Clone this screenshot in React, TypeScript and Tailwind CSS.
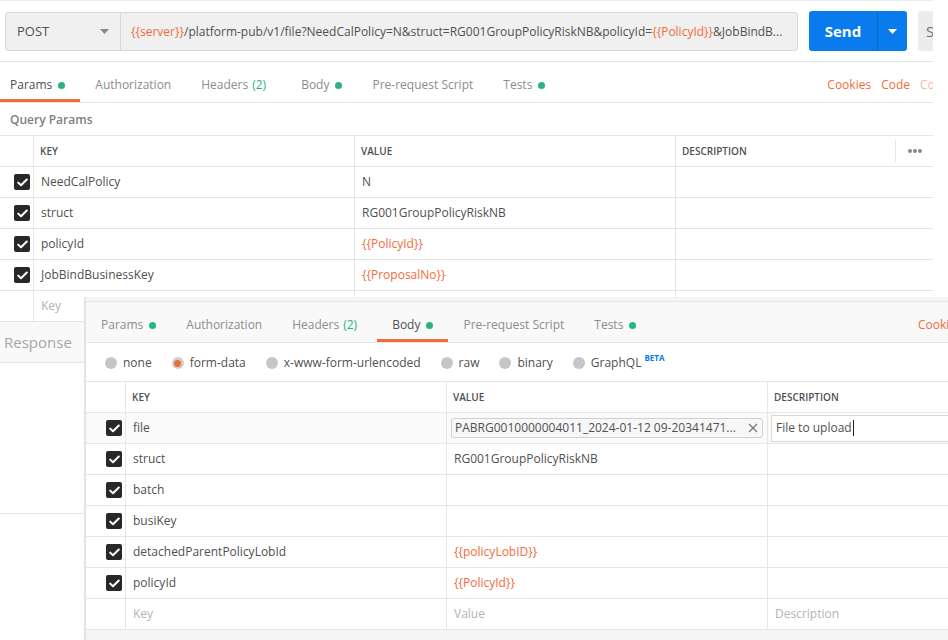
import React from "react";

const ORANGE = "text-[#f26b3a]";

const Dot = () => <span className="ml-[6px] inline-block h-[7px] w-[7px] rounded-full bg-[#26b47f]" />;

const Check = () => (
  <span className="flex h-[16px] w-[16px] items-center justify-center rounded-[2px] bg-[#282828]">
    <svg width="11" height="9" viewBox="0 0 11 9" fill="none">
      <path d="M1.2 4.6 L4 7.3 L9.8 1.5" stroke="white" strokeWidth="2" strokeLinecap="round" strokeLinejoin="round" />
    </svg>
  </span>
);

const Var = ({ name }: { name: string }) => <span className={ORANGE}>{`{{${name}}}`}</span>;

type Tab = { label: string; dot?: boolean; count?: string };

const tabs: Tab[] = [
  { label: "Params", dot: true },
  { label: "Authorization" },
  { label: "Headers", count: "(2)" },
  { label: "Body", dot: true },
  { label: "Pre-request Script" },
  { label: "Tests", dot: true },
];

const TabBar = ({ active, first }: { active: string; first: number }) => (
  <div className="flex h-full items-stretch">
    {tabs.map((t, i) => (
      <div
        key={t.label}
        className={`relative flex items-center pt-[6px] ${t.count ? "pr-[20px]" : "pr-[15px]"} ${
          i === 0 && first === 10 ? "pl-[10px]" : "pl-[15px]"
        } ${t.label === active ? "text-[#505050]" : "text-[#8c8c8c]"}`}
      >
        {t.label}
        {t.count && <span className="ml-[4px] text-[#26b47f]">{t.count}</span>}
        {t.dot && <Dot />}
        {t.label === active && <span className="absolute bottom-[0px] left-0 right-0 h-[3px] bg-[#f26b3a]" />}
      </div>
    ))}
  </div>
);

const queryRows: { k: string; v: React.ReactNode }[] = [
  { k: "NeedCalPolicy", v: "N" },
  { k: "struct", v: "RG001GroupPolicyRiskNB" },
  { k: "policyId", v: <Var name="PolicyId" /> },
  { k: "JobBindBusinessKey", v: <Var name="ProposalNo" /> },
];

const bodyRows: { k: string; v?: React.ReactNode }[] = [
  { k: "struct", v: "RG001GroupPolicyRiskNB" },
  { k: "batch" },
  { k: "busiKey" },
  { k: "detachedParentPolicyLobId", v: <Var name="policyLobID" /> },
  { k: "policyId", v: <Var name="PolicyId" /> },
];

const radios = ["none", "form-data", "x-www-form-urlencoded", "raw", "binary", "GraphQL"];

export default function App() {
  return (
    <div className="relative h-[640px] w-[948px] overflow-hidden bg-white font-['Open_Sans',sans-serif] text-[12px] text-[#505050]">
      {/* first screenshot: params */}
      <div className="w-[933px] border-t border-[#ececec]">
        <div className="flex h-[61px] items-start overflow-hidden border-b border-[#e6e6e6] pl-[5px] pt-[11px]">
          <div className="flex h-[39px] w-[793px] shrink-0 rounded-[3px] border border-[#d9d9d9] bg-[#f0f0f0]">
            <div className="flex w-[115px] shrink-0 items-center justify-between border-r border-[#d9d9d9] px-[11px] text-[13px] text-[#505050]">
              POST
              <svg width="9" height="5" viewBox="0 0 9 5">
                <path d="M0 0 H9 L4.5 5 Z" fill="#888" />
              </svg>
            </div>
            <div className="flex min-w-0 items-center whitespace-nowrap pl-[10px] text-[12px] text-[#505050]">
              <Var name="server" />
              /platform-pub/v1/file?NeedCalPolicy=N&amp;struct=RG001GroupPolicyRiskNB&amp;policyId=
              <Var name="PolicyId" />
              &amp;JobBindB...
            </div>
          </div>
          <div className="ml-[11px] mt-[-1px] flex h-[40px] w-[98px] shrink-0 overflow-hidden rounded-[3px] bg-[#097bed]">
            <div className="flex w-[68px] items-center justify-center text-[15px] font-bold text-white">Send</div>
            <div className="flex flex-1 items-center justify-center border-l border-[#0a6acc]">
              <svg width="9" height="5" viewBox="0 0 9 5">
                <path d="M0 0 H9 L4.5 5 Z" fill="white" />
              </svg>
            </div>
          </div>
          <div className="ml-[11px] mt-[-1px] flex h-[40px] min-w-0 flex-1 items-center overflow-hidden rounded-l-[3px] bg-[#ececec] pl-[8px] text-[15px] text-[#707070]">
            S
          </div>
        </div>
        <div className="flex h-[41px] items-stretch justify-between border-b border-[#e6e6e6] text-[12px]">
          <TabBar active="Params" first={10} />
          <div className="flex items-center gap-[10px] pt-[6px] text-[12px] text-[#f26b3a]">
            <span>Cookies</span>
            <span>Code</span>
            <span className="w-[13px] overflow-hidden whitespace-nowrap text-[#f8b8a0]">Co</span>
          </div>
        </div>
        <div className="flex h-[32px] items-center pl-[10px] pt-[2px] text-[12px] font-semibold text-[#808080]">Query Params</div>
        <div className="grid grid-cols-[34px_321px_321px_257px] border-t border-[#e6e6e6]">
          <div className="h-[31px] border-b border-r border-[#e6e6e6]" />
          <div className="flex h-[31px] items-center border-b border-r border-[#e6e6e6] pl-[6px] text-[10px] font-semibold text-[#505050]">KEY</div>
          <div className="flex h-[31px] items-center border-b border-r border-[#e6e6e6] pl-[6px] text-[10px] font-semibold text-[#505050]">VALUE</div>
          <div className="flex h-[31px] items-center border-b border-[#e6e6e6] pl-[6px] text-[10px] font-semibold text-[#505050]">
            <span className="flex-1">DESCRIPTION</span>
            <span className="flex h-[22px] items-center gap-[1px] border-l border-[#e6e6e6] pl-[12px] pr-[11px]">
              <i className="h-[4px] w-[4px] rounded-full bg-[#888]" />
              <i className="h-[4px] w-[4px] rounded-full bg-[#888]" />
              <i className="h-[4px] w-[4px] rounded-full bg-[#888]" />
            </span>
          </div>
          {queryRows.map((r) => (
            <React.Fragment key={r.k}>
              <div className="flex h-[31px] items-center justify-end border-b border-r border-[#e6e6e6] pr-[3px]">
                <Check />
              </div>
              <div className="flex h-[31px] items-center border-b border-r border-[#e6e6e6] pl-[7px]">{r.k}</div>
              <div className="flex h-[31px] items-center border-b border-r border-[#e6e6e6] pl-[7px]">{r.v}</div>
              <div className="h-[31px] border-b border-[#e6e6e6]" />
            </React.Fragment>
          ))}
          <div className="h-[31px] border-b border-r border-[#e6e6e6]" />
          <div className="flex h-[31px] items-center border-b border-r border-[#e6e6e6] pl-[7px] text-[#b3b3b3]">Key</div>
          <div className="h-[31px] border-b border-r border-[#e6e6e6]" />
          <div className="h-[31px] border-b border-[#e6e6e6]" />
        </div>
        <div className="flex h-[41px] items-center border-b border-[#e6e6e6] bg-[#f9f9f9] pl-[4px] text-[15px] text-[#a6a6a6]">Response</div>
        <div className="h-[151px] border-b border-[#e6e6e6]" />
      </div>

      {/* second screenshot: body, laid over the first */}
      <div className="absolute left-[84px] top-[297px] flex h-[343px] w-[864px] flex-col border-l-2 border-[#e3e3e3] bg-[#f5f5f5]">
        <div className="mt-[4px] flex h-[42px] items-stretch justify-between border-y border-[#e6e6e6] bg-[#f9f9f9]">
          <TabBar active="Body" first={15} />
          <div className="flex items-center pt-[6px] text-[#f26b3a]">
            <span className="w-[30px] overflow-hidden whitespace-nowrap">Cookies</span>
          </div>
        </div>
        <div className="flex h-[39px] items-center gap-[20px] border-b border-[#e6e6e6] bg-white pl-[19px] pt-[2px]">
          {radios.map((r) => (
            <div key={r} className="flex items-center gap-[6px]">
              {r === "form-data" ? (
                <span className="flex h-[12px] w-[12px] items-center justify-center rounded-full bg-[#cfcfcf]">
                  <span className="h-[7px] w-[7px] rounded-full bg-[#f26b3a]" />
                </span>
              ) : (
                <span className="h-[12px] w-[12px] rounded-full bg-[#c6c6c6]" />
              )}
              <span className="text-[12px] text-[#505050]">{r}</span>
              {r === "GraphQL" && <span className="-ml-[3px] mb-[10px] text-[8px] font-bold text-[#097bed]">BETA</span>}
            </div>
          ))}
        </div>
        <div className="grid grid-cols-[40px_321px_321px_1fr] bg-white">
          <div className="h-[31px] border-b border-r border-[#e6e6e6]" />
          <div className="flex h-[31px] items-center border-b border-r border-[#e6e6e6] pl-[6px] text-[10px] font-semibold">KEY</div>
          <div className="flex h-[31px] items-center border-b border-r border-[#e6e6e6] pl-[6px] text-[10px] font-semibold">VALUE</div>
          <div className="flex h-[31px] items-center border-b border-[#e6e6e6] pl-[6px] text-[10px] font-semibold">DESCRIPTION</div>

          <div className="flex h-[31px] items-center justify-end border-b border-r border-[#e6e6e6] bg-[#fafafa] pr-[3px]">
            <Check />
          </div>
          <div className="flex h-[31px] items-center border-b border-r border-[#e6e6e6] bg-[#fafafa] pl-[7px]">file</div>
          <div className="flex h-[31px] items-center border-b border-r border-[#e6e6e6] bg-[#fafafa] px-[4px]">
            <div className="flex h-[20px] flex-1 items-center justify-between rounded-[3px] border border-[#d0d0d0] bg-[#f7f7f7] pl-[3px] pr-[4px]">
              <span>PABRG0010000004011_2024-01-12 09-20341471...</span>
              <svg width="10" height="10" viewBox="0 0 10 10">
                <path d="M1 1 L9 9 M9 1 L1 9" stroke="#777" strokeWidth="1.3" />
              </svg>
            </div>
          </div>
          <div className="flex h-[31px] items-center border-b border-[#e6e6e6] bg-[#fafafa] pl-[3px]">
            <div className="flex h-[27px] flex-1 items-center border border-r-0 border-[#d9d9d9] bg-white pl-[4px]">
              File to upload
              <span className="ml-[1px] h-[16px] w-[1px] bg-[#222]" />
            </div>
          </div>

          {bodyRows.map((r, i) => (
            <React.Fragment key={r.k + i}>
              <div className="flex h-[31px] items-center justify-end border-b border-r border-[#e6e6e6] pr-[3px]">
                <Check />
              </div>
              <div className="flex h-[31px] items-center border-b border-r border-[#e6e6e6] pl-[7px]">{r.k}</div>
              <div className="flex h-[31px] items-center border-b border-r border-[#e6e6e6] pl-[7px]">{r.v}</div>
              <div className="h-[31px] border-b border-[#e6e6e6]" />
            </React.Fragment>
          ))}
          <div className="h-[31px] border-b border-r border-[#e6e6e6]" />
          <div className="flex h-[31px] items-center border-b border-r border-[#e6e6e6] pl-[7px] text-[#b3b3b3]">Key</div>
          <div className="flex h-[31px] items-center border-b border-r border-[#e6e6e6] pl-[7px] text-[#b3b3b3]">Value</div>
          <div className="flex h-[31px] items-center border-b border-[#e6e6e6] pl-[7px] text-[#b3b3b3]">Description</div>
        </div>
      </div>
    </div>
  );
}
